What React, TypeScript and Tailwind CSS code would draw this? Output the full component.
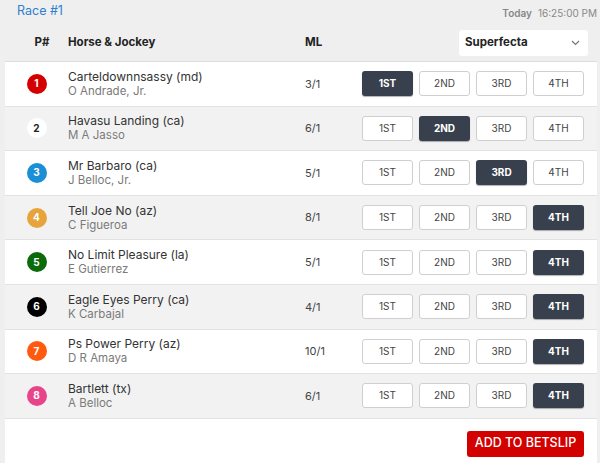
import React from "react";

const runners = [
  { n: 1, name: "Carteldownnsassy (md)", jockey: "O Andrade, Jr.", ml: "3/1", pick: 0, badge: "bg-[#d40000] text-white" },
  { n: 2, name: "Havasu Landing (ca)", jockey: "M A Jasso", ml: "6/1", pick: 1, badge: "bg-white text-[#222]" },
  { n: 3, name: "Mr Barbaro (ca)", jockey: "J Belloc, Jr.", ml: "5/1", pick: 2, badge: "bg-[#1a8fd6] text-white" },
  { n: 4, name: "Tell Joe No (az)", jockey: "C Figueroa", ml: "8/1", pick: 3, badge: "bg-[#e6a43a] text-white" },
  { n: 5, name: "No Limit Pleasure (la)", jockey: "E Gutierrez", ml: "5/1", pick: 3, badge: "bg-[#0b6a0b] text-white" },
  { n: 6, name: "Eagle Eyes Perry (ca)", jockey: "K Carbajal", ml: "4/1", pick: 3, badge: "bg-black text-white" },
  { n: 7, name: "Ps Power Perry (az)", jockey: "D R Amaya", ml: "10/1", pick: 3, badge: "bg-[#ff5a0f] text-white" },
  { n: 8, name: "Bartlett (tx)", jockey: "A Belloc", ml: "6/1", pick: 3, badge: "bg-[#e8448a] text-white" },
];

const places = ["1ST", "2ND", "3RD", "4TH"];

const App = () => {
  return (
    <div className="w-[600px] h-[463px] bg-[#efefef] overflow-hidden text-[#333]" style={{ fontFamily: "Inter, 'Noto Sans', sans-serif" }}>
      <div className="flex items-center justify-between h-[24px] pl-[17px] pr-[3px]">
        <div className="text-[12.5px] text-[#2f7fcf] pb-[2px]">Race #1</div>
        <div className="text-[10px] text-[#888] pt-[2px]">
          <span className="font-semibold">Today</span>
          <span className="ml-[6px]">16:25:00 PM</span>
        </div>
      </div>

      <div className="ml-[5px] mr-[3px] bg-white">
        <div className="flex items-center h-[38px] bg-[#efefef] border-b border-[#dcdcdc] text-[11.5px] font-bold text-[#222]">
          <div className="w-[63px] text-center pl-[11px]">P#</div>
          <div className="w-[237px]">Horse &amp; Jockey</div>
          <div className="w-[154px]">ML</div>
          <div className="flex items-center justify-between w-[129px] h-[26px] bg-white rounded-[3px] pl-[6px] pr-[8px]">
            <span className="text-[11.5px] font-bold">Superfecta</span>
            <svg width="9" height="6" viewBox="0 0 9 6" fill="none">
              <path d="M1 1 L4.5 4.5 L8 1" stroke="#777" strokeWidth="1.2" />
            </svg>
          </div>
        </div>

        {runners.map((r, i) => (
          <div
            key={r.n}
            className={`flex items-center h-[44.6px] border-b border-[#e2e2e2] ${i % 2 === 0 ? "bg-white" : "bg-[#f2f2f2]"}`}
          >
            <div className="w-[63px] flex justify-center">
              <div className={`w-[20px] h-[20px] rounded-full flex items-center justify-center text-[10px] font-bold ${r.badge}`}>
                {r.n}
              </div>
            </div>
            <div className="w-[237px] flex flex-col leading-[14px]">
              <span className="text-[12px] text-[#333]">{r.name}</span>
              <span className="text-[11.5px] text-[#7a7a7a]">{r.jockey}</span>
            </div>
            <div className="w-[57px] text-[11px] text-[#444]">{r.ml}</div>
            <div className="flex gap-[6px]">
              {places.map((p, j) => (
                <div
                  key={p}
                  className={`w-[51px] h-[25px] rounded-[3px] flex items-center justify-center text-[10px] ${
                    j === r.pick
                      ? "bg-[#37404c] text-white font-bold shadow-[0_1px_1px_rgba(0,0,0,0.3)]"
                      : "bg-white border border-[#cfcfcf] text-[#444]"
                  }`}
                >
                  {p}
                </div>
              ))}
            </div>
          </div>
        ))}

        <div className="flex justify-end items-start h-[46px] pt-[12px] pr-[13px]">
          <div className="w-[117px] h-[26px] bg-[#d30000] rounded-[3px] flex items-center justify-center text-white text-[12.5px] font-medium">
            ADD TO BETSLIP
          </div>
        </div>
      </div>
    </div>
  );
};

export default App;
